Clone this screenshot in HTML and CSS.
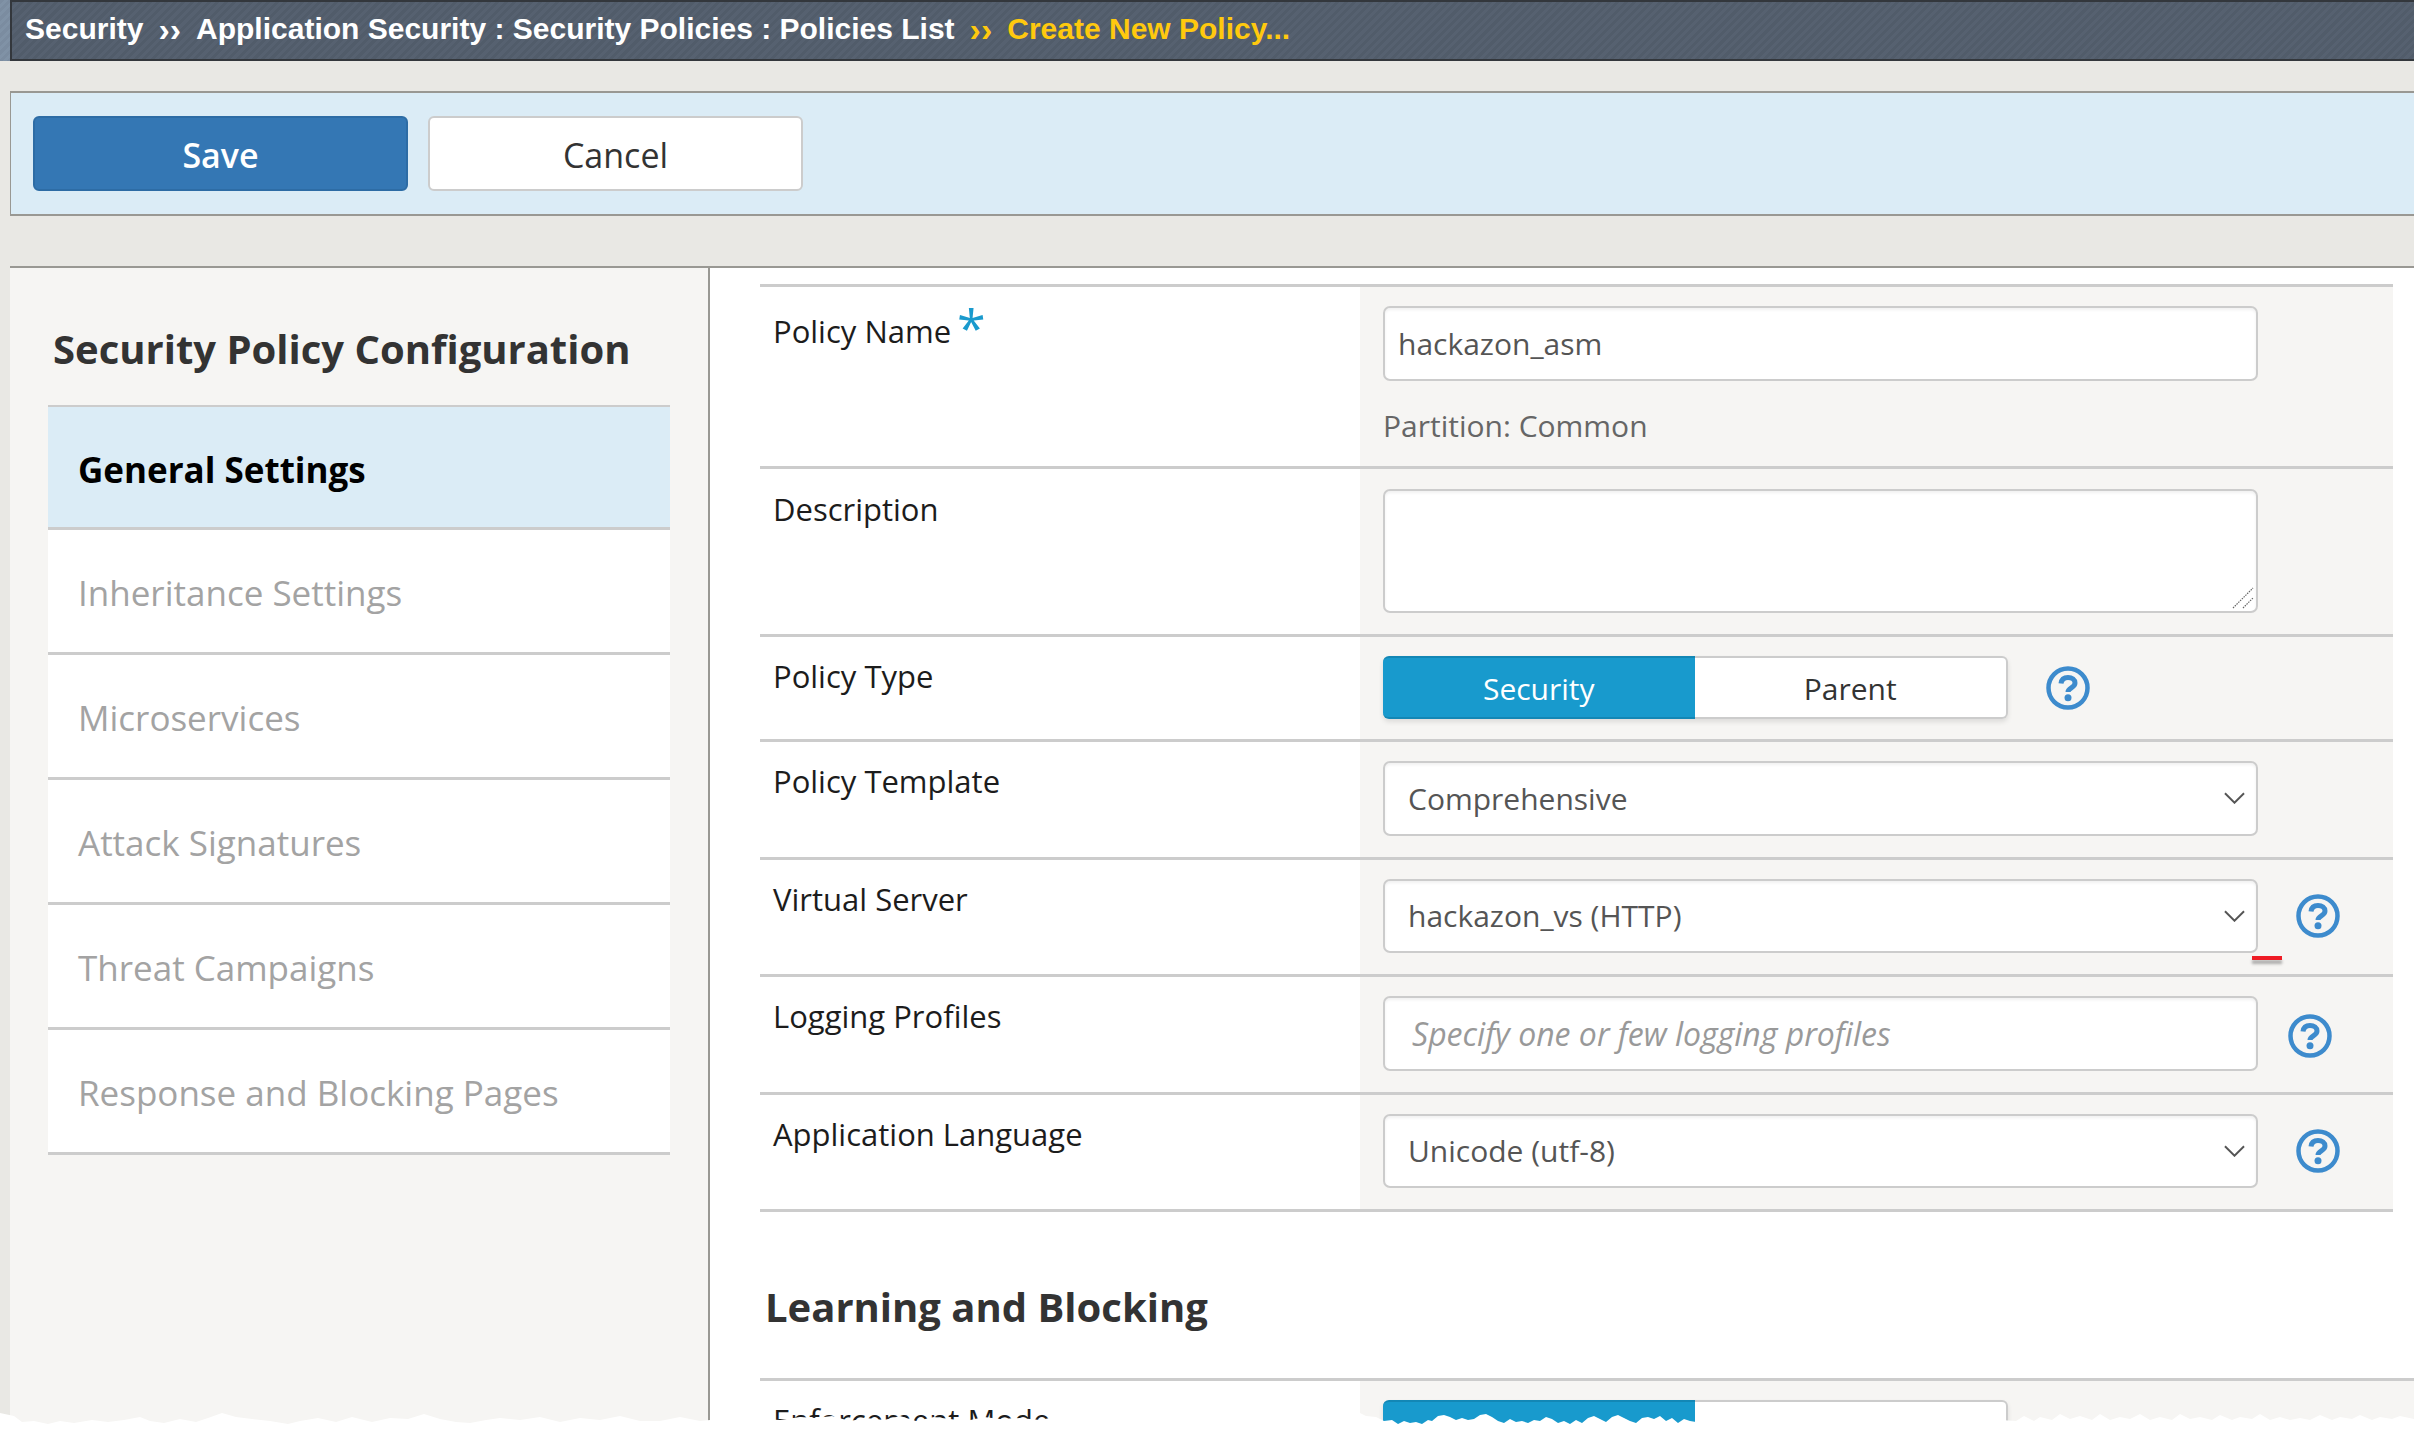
FILE: index.html
```html
<!DOCTYPE html>
<html lang="en">
<head>
<meta charset="utf-8">
<title>Create New Policy</title>
<link rel="stylesheet" href="styles.css">
</head>
<body>
<header class="topbar">
  <div class="topbar-strip"></div>
  <nav class="crumbs">
    <span>Security</span><span class="sep">››</span><span>Application Security : Security Policies : Policies List</span><span class="sep cur">››</span><span class="cur">Create New Policy...</span>
  </nav>
</header>
<div class="toolbar">
  <button class="btn btn-primary">Save</button>
  <button class="btn">Cancel</button>
</div>
<main class="main">
  <aside class="sidebar">
    <h2 class="side-title">Security Policy Configuration</h2>
    <ul class="side-nav">
      <li class="side-item active">General Settings</li>
      <li class="side-item">Inheritance Settings</li>
      <li class="side-item">Microservices</li>
      <li class="side-item">Attack Signatures</li>
      <li class="side-item">Threat Campaigns</li>
      <li class="side-item">Response and Blocking Pages</li>
    </ul>
  </aside>
  <section class="content">
    <div class="form">
      <div class="row row-name">
        <div class="label">Policy Name <span class="req">*</span></div>
        <div class="value value-stack">
          <input class="field field-name" value="hackazon_asm">
          <div class="partition">Partition: Common</div>
        </div>
      </div>
      <div class="row row-desc">
        <div class="label">Description</div>
        <div class="value">
          <div class="area-wrap">
            <textarea class="field area"></textarea>
            <svg class="grip" width="22" height="22" viewBox="0 0 22 22"><path d="M1 21 21 1M11 21 21 11" fill="none" stroke="#666" stroke-width="1.2" stroke-dasharray="1.5 1"/></svg>
          </div>
        </div>
      </div>
      <div class="row">
        <div class="label">Policy Type</div>
        <div class="value">
          <div class="seg"><span class="seg-btn on">Security</span><span class="seg-btn">Parent</span></div>
          <svg class="help" viewBox="0 0 44 44"><use href="#q"/></svg>
        </div>
      </div>
      <div class="row row-sel">
        <div class="label">Policy Template</div>
        <div class="value">
          <div class="sel"><select class="field select"><option>Comprehensive</option></select><svg class="chev" viewBox="0 0 22 12"><path d="M1 1 11 11 21 1"/></svg></div>
        </div>
      </div>
      <div class="row row-sel">
        <div class="label">Virtual Server</div>
        <div class="value">
          <div class="sel"><select class="field select"><option>hackazon_vs (HTTP)</option></select><svg class="chev" viewBox="0 0 22 12"><path d="M1 1 11 11 21 1"/></svg><span class="red-mark"></span></div>
          <svg class="help" viewBox="0 0 44 44"><use href="#q"/></svg>
        </div>
      </div>
      <div class="row row-sel">
        <div class="label">Logging Profiles</div>
        <div class="value">
          <div class="sel"><input class="field multi" placeholder="Specify one or few logging profiles"></div>
          <svg class="help help-low" viewBox="0 0 44 44"><use href="#q"/></svg>
        </div>
      </div>
      <div class="row row-sel row-last">
        <div class="label">Application Language</div>
        <div class="value">
          <div class="sel"><select class="field select"><option>Unicode (utf-8)</option></select><svg class="chev" viewBox="0 0 22 12"><path d="M1 1 11 11 21 1"/></svg></div>
          <svg class="help" viewBox="0 0 44 44"><use href="#q"/></svg>
        </div>
      </div>
    </div>
    <h2 class="section-title">Learning and Blocking</h2>
    <div class="form form-wide">
      <div class="row">
        <div class="label">Enforcement Mode</div>
        <div class="value">
          <div class="seg"><span class="seg-btn on">Transparent</span><span class="seg-btn">Blocking</span></div>
        </div>
      </div>
    </div>
  </section>
</main>
<svg class="tear" viewBox="0 0 2414 22" preserveAspectRatio="none"><path fill="#fff" d="M0 5 14 8 22 14 34 13 48 16 60 13 74 15 92 12 108 14 124 12 140 9 150 13 164 15 180 11 196 14 208 10 222 5 236 9 252 11 270 13 288 16 300 13 318 10 336 14 352 9 372 14 390 10 408 11 424 6 440 11 456 14 470 15 486 12 500 10 520 12 540 9 560 14 580 10 600 12 620 8 640 13 660 13 680 9 700 13 720 11 742 12 760 11 780 12 800 9 816 10 832 8 850 13 866 10 884 12 900 8 916 13 934 9 950 11 966 13 984 9 1000 11 1020 10 1040 12 1060 8 1078 11 1094 13 1112 9 1130 12 1150 9 1170 12 1190 10 1210 12 1230 9 1250 12 1270 9 1290 11 1310 10 1330 12 1345 10 1360 5 1366 8 1376 9 1384 13 1392 12 1398 16 1404 13 1410 15 1416 14 1422 16 1428 12 1432 13 1438 8 1444 7 1450 9 1456 12 1462 10 1468 12 1474 11 1480 7 1486 6 1492 9 1498 13 1504 15 1510 11 1516 14 1522 13 1528 15 1534 12 1540 13 1546 9 1552 11 1558 15 1564 13 1570 16 1576 12 1582 15 1588 10 1594 8 1600 11 1606 14 1612 9 1618 7 1624 10 1630 13 1636 15 1642 10 1648 9 1654 11 1660 8 1666 13 1672 10 1678 15 1684 11 1690 13 1696 14 1704 13 1720 11 1736 13 1750 9 1766 13 1780 12 1800 12 1820 13 1840 14 1850 11 1862 14 1880 12 1900 8 1916 12 1932 10 1950 12 1980 10 2000 12 2016 13 2024 8 2034 13 2040 9 2052 12 2060 6 2070 11 2080 8 2092 12 2100 6 2110 12 2120 9 2130 11 2140 6 2150 12 2160 9 2172 12 2180 6 2190 11 2200 9 2212 12 2220 7 2232 12 2240 9 2252 11 2260 6 2270 12 2280 9 2290 12 2300 10 2310 12 2320 7 2332 12 2340 9 2352 11 2360 7 2372 12 2380 9 2392 11 2400 8 2414 11V22H0Z"/></svg>
<svg class="defs" width="0" height="0" aria-hidden="true">
  <symbol id="q" viewBox="0 0 44 44">
    <circle cx="22" cy="22" r="19.500" fill="none" stroke="#3d8bcd" stroke-width="4.500"/>
    <path d="M15 17.500C15.500 13.500 18.200 11.500 22 11.500c4 0 7 2.300 7 5.500 0 4.800-7 4.800-7 9" fill="none" stroke="#3d8bcd" stroke-width="5"/>
    <circle cx="22" cy="31.800" r="3.500" fill="#3d8bcd"/>
  </symbol>
</svg>
</body>
</html>
```
FILE: styles.css
```css
* { box-sizing: border-box; }
html, body { margin: 0; height: 100%; }
body {
  height: 1430px;
  overflow: hidden;
  display: flex;
  flex-direction: column;
  position: relative;
  background: #e9e8e4;
  font-family: "Open Sans", "Liberation Sans", sans-serif;
  color: #222;
}
.topbar { flex: none; height: 61px; display: flex; }
.topbar-strip {
  width: 10px;
  background: repeating-linear-gradient(135deg, #7b8ca0 0 3px, #8092a6 3px 6px);
}
.crumbs {
  flex: 1;
  display: flex;
  align-items: center;
  padding: 0 0 3px 13px;
  border: 2px solid #33373c;
  border-right: 0;
  background: repeating-linear-gradient(135deg, #515c6a 0 3px, #566170 3px 6px);
  font: bold 30px/1 "Liberation Sans", Arial, sans-serif;
  color: #fff;
  white-space: nowrap;
}
.sep { margin: 0 15px; font-size: 34px; }
.cur { color: #ffc90e; }
.toolbar {
  flex: none;
  height: 125px;
  margin: 30px 0 0 10px;
  padding: 23px 21px 0 22px;
  display: flex;
  gap: 20px;
  align-items: flex-start;
  background: #dbecf6;
  border: solid #999893;
  border-width: 2px 0 2px 1px;
}
.btn {
  width: 375px;
  height: 75px;
  padding: 2px 0 0;
  border: 2px solid #ccc;
  border-radius: 6px;
  background: #fff;
  color: #333;
  font: 34px "Open Sans", sans-serif;
}
.btn-primary {
  background: #3477b4;
  border-color: #2d6ca5;
  color: #fff;
  font-weight: 600;
}
.main {
  flex: 1;
  min-height: 0;
  margin: 50px 0 0 10px;
  display: flex;
  border-top: 2px solid #999893;
  background: #fff;
}
.sidebar {
  flex: none;
  width: 700px;
  padding: 0 38px 0 38px;
  background: #f6f5f3;
  border-right: 2px solid #999893;
}
.side-title {
  margin: 0;
  height: 137px;
  padding: 49px 0 0 5px;
  font-size: 40px;
  line-height: 64px;
  font-weight: 700;
  color: #333;
  white-space: nowrap;
}
.side-nav {
  list-style: none;
  margin: 0;
  padding: 0;
  background: #fff;
  border-top: 2px solid #ccc;
}
.side-item {
  height: 125px;
  padding: 3px 0 0 30px;
  display: flex;
  align-items: center;
  border-bottom: 3px solid #ccc;
  font-size: 35px;
  color: #a3a3a3;
}
.side-item.active {
  height: 123px;
  padding-top: 4px;
  background: #dbecf6;
  color: #000;
  font-weight: 700;
}
.content { flex: 1; min-width: 0; padding: 16px 0 0 50px; }
.form { margin-right: 21px; }
.form-wide { margin-right: 0; }
.row {
  display: flex;
  border-top: 3px solid #ccc;
}
.row-last { border-bottom: 3px solid #ccc; }
.label {
  flex: none;
  width: 600px;
  padding: 18px 0 0 13px;
  font-size: 31px;
  line-height: 42px;
  color: #1c1c1c;
}
.row-name .label { padding-top: 23px; }
.row-desc .label { padding-top: 19px; }
.req {
  display: inline-block;
  margin-left: -2px;
  color: #1a9acd;
  font-size: 52px;
  line-height: 0;
  vertical-align: -4px;
}
.value {
  flex: 1;
  padding: 19px 0 20px 23px;
  display: flex;
  align-items: center;
  background: #f6f5f3;
}
.row-name .value { display: block; padding: 19px 0 19px 23px; }
.row-desc .value { padding-top: 20px; padding-bottom: 21px; }
.row-sel .value { padding-bottom: 21px; }
.field {
  width: 875px;
  border: 2px solid #ccc;
  border-radius: 7px;
  background: #fff;
  font: 30px "Open Sans", sans-serif;
  color: #555;
  box-shadow: inset 0 2px 3px rgba(0,0,0,.06);
  outline: none;
}
.field-name { display: block; height: 75px; padding: 0 13px; }
.partition {
  margin-top: 24px;
  font-size: 30px;
  line-height: 42px;
  color: #666;
}
.area-wrap { position: relative; width: 875px; height: 124px; }
.area { display: block; height: 124px; resize: none; }
.grip { position: absolute; right: 4px; bottom: 4px; }
.seg {
  display: flex;
  width: 625px;
  height: 63px;
  box-shadow: 0 3px 5px rgba(0,0,0,.1);
  border-radius: 6px;
}
.seg-btn {
  flex: 1;
  display: flex;
  align-items: center;
  justify-content: center;
  padding-top: 1px;
  background: #fff;
  border: 2px solid #ccc;
  border-left: 0;
  border-radius: 0 6px 6px 0;
  font-size: 30px;
  color: #333;
}
.seg-btn.on {
  background: #189acd;
  border: 0;
  border-bottom: 2px solid #1387b5;
  border-top: 2px solid #1387b5;
  border-radius: 6px 0 0 6px;
  color: #fff;
}
.help { flex: none; width: 44px; height: 44px; margin-left: 38px; }
.help-low { margin: 6px 0 0 30px; }
.sel { position: relative; flex: none; width: 875px; height: 74.500px; }
.select, .multi { display: block; height: 100%; }
.select {
  appearance: none;
  -webkit-appearance: none;
  padding: 0 40px 0 23px;
}
.multi { padding: 0 27px; font-size: 32px; }
.multi::placeholder { color: #999; font-style: italic; opacity: 1; }
.chev {
  position: absolute;
  right: 13px;
  top: 31px;
  width: 21px;
  height: 12px;
  fill: none;
  stroke: #555;
  stroke-width: 2;
}
.red-mark {
  position: absolute;
  left: 869px;
  top: 77px;
  width: 30px;
  height: 4px;
  background: #ee1c25;
  box-shadow: 0 4px 3px rgba(0,0,0,.3);
}
.section-title {
  margin: 0;
  height: 166px;
  padding: 59px 0 0 5px;
  font-size: 40px;
  line-height: 72px;
  font-weight: 700;
  color: #333;
}
.tear {
  position: absolute;
  left: 0;
  bottom: 0;
  width: 2414px;
  height: 22px;
}
.defs { position: absolute; }
```
